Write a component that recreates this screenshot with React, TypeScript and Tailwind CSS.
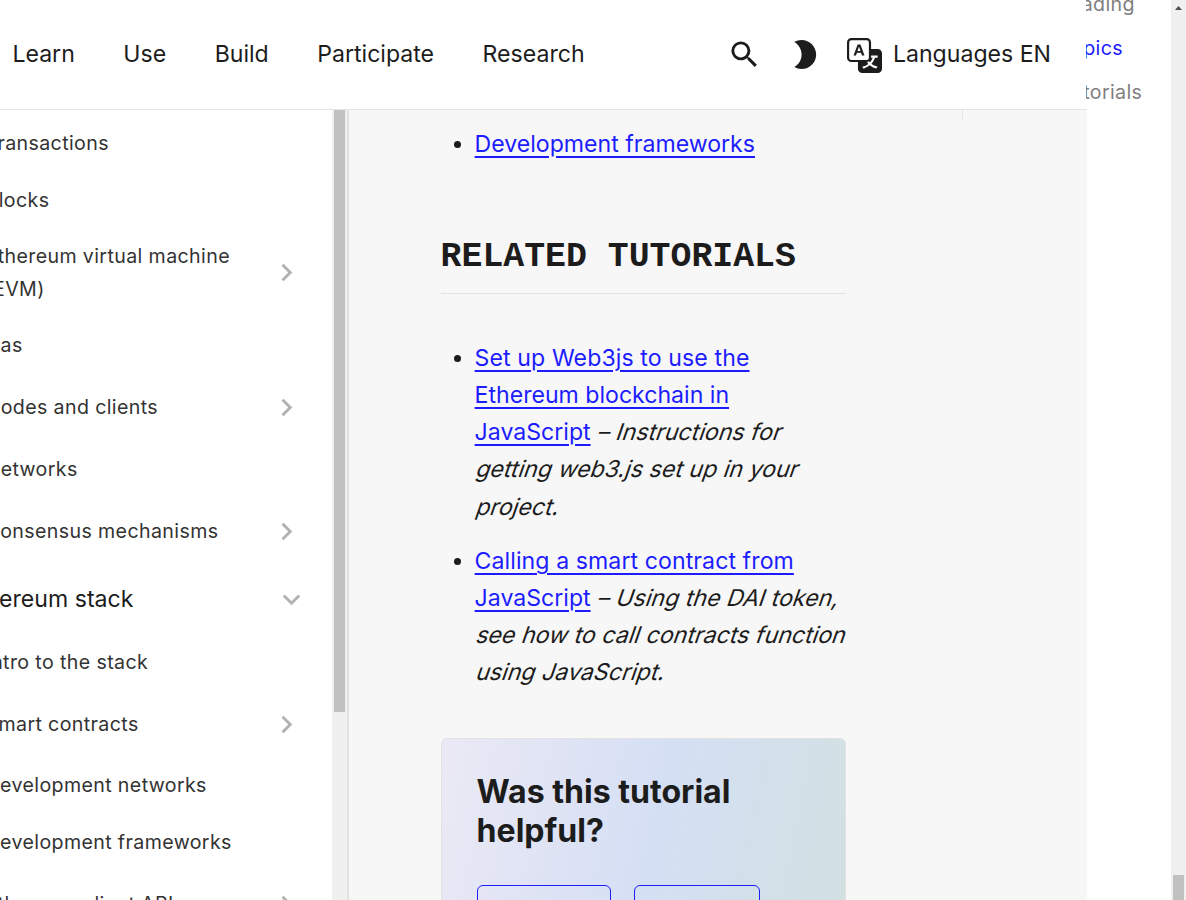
import React from "react";
import { MdSearch, MdBrightness2, MdChevronRight, MdExpandMore } from "react-icons/md";
import { BsTranslate } from "react-icons/bs";

type Item = { label: React.ReactNode; kind: "plain" | "nested" | "tall" | "section" };

const items: Item[] = [
  { label: "Transactions", kind: "plain" },
  { label: "Blocks", kind: "plain" },
  { label: <>Ethereum virtual machine<br />(EVM)</>, kind: "tall" },
  { label: "Gas", kind: "plain" },
  { label: "Nodes and clients", kind: "nested" },
  { label: "Networks", kind: "plain" },
  { label: "Consensus mechanisms", kind: "nested" },
  { label: "Ethereum stack", kind: "section" },
  { label: "Intro to the stack", kind: "plain" },
  { label: "Smart contracts", kind: "nested" },
  { label: "Development networks", kind: "plain" },
  { label: "Development frameworks", kind: "plain" },
  { label: "Ethereum client APIs", kind: "nested" },
];

const rowClass = {
  plain: "h-[56.8px] -ml-[14.5px] text-[19.6px] tracking-[0.38px] text-[#333333]",
  nested: "h-[67.1px] -ml-[14.5px] pr-[28px] text-[19.6px] tracking-[0.38px] text-[#333333]",
  tall: "h-[88.6px] -ml-[14.5px] pr-[28px] text-[19.6px] tracking-[0.38px] text-[#333333]",
  section: "h-[68.7px] -ml-[36px] pr-[23px] text-[23.1px] text-[#1c1c1c]",
};

function Sidebar() {
  return (
    <aside className="flex w-[349px] shrink-0 overflow-hidden bg-white">
      <nav className="w-[332px] overflow-hidden pt-[5px]">
        {items.map((item, i) => (
          <div key={i} className={`flex items-center justify-between leading-[33px] whitespace-nowrap ${rowClass[item.kind]}`}>
            <span>{item.label}</span>
            {(item.kind === "nested" || item.kind === "tall") && <MdChevronRight size={35} className="shrink-0 text-[#b2b2b2]" />}
            {item.kind === "section" && <MdExpandMore size={35} className="shrink-0 text-[#b2b2b2]" />}
          </div>
        ))}
      </nav>
      <div className="flex w-[15px] justify-center bg-[#f0f0f0]">
        <div className="h-[602px] w-[11px] bg-[#c1c1c1]" />
      </div>
      <div className="w-[2px] bg-[#e2e2e2]" />
    </aside>
  );
}

function Link({ children }: { children: React.ReactNode }) {
  return (
    <a className="text-[#1c1cff] underline decoration-2 underline-offset-[4px]">{children}</a>
  );
}

/* One slanted line of upright letterforms, sheared about its baseline. */
function Slanted({ children }: { children: React.ReactNode }) {
  return (
    <em className="-ml-px inline-block origin-[0_73%] -skew-x-[19deg] tracking-[0.03px] not-italic">{children}</em>
  );
}

function Header() {
  return (
    <header className="flex h-[110px] shrink-0 items-center border-b border-[#e5e5e5] bg-white pr-[36px] pl-[12.4px] text-[23.1px] text-[#1c1c1c]">
      <nav className="flex gap-[48.5px]">
        <a>Learn</a>
        <a>Use</a>
        <a>Build</a>
        <a>Participate</a>
        <a>Research</a>
      </nav>
      <div className="ml-auto flex items-center">
        <MdSearch size={35} className="mr-[25px]" />
        <MdBrightness2 size={35} className="mr-[25px]" />
        <BsTranslate size={35} className="mt-px mr-[11px]" />
        <span>Languages EN</span>
      </div>
    </header>
  );
}

function Article() {
  return (
    <main className="flex flex-1 justify-between overflow-hidden pl-[91.6px] text-[#1c1c1c]">
      <div className="w-[405px] text-[23.1px] leading-[37.2px]">
        <ul className="list-disc pt-[15.8px] pl-[34px] marker:text-[21.5px]">
          <li><Link>Development frameworks</Link></li>
        </ul>
        <h2 className="mt-[71.2px] h-[60px] border-b border-[#e2e2e2] font-['Liberation_Mono',monospace] text-[34.83px] leading-[46px] font-bold whitespace-nowrap">
          RELATED TUTORIALS
        </h2>
        <ul className="list-disc pt-[45.6px] pl-[34px] whitespace-nowrap marker:text-[21.5px]">
          <li className="mb-[17px]">
            <Link><span className="tracking-[0.1px]">Set up Web3js to use the</span><br />Ethereum blockchain in<br />JavaScript</Link>{" "}
            <Slanted>– Instructions for</Slanted><br />
            <Slanted>getting web3.js set up in your</Slanted><br />
            <Slanted>project.</Slanted>
          </li>
          <li>
            <Link><span className="tracking-[0.08px]">Calling a smart contract from</span><br />JavaScript</Link>{" "}
            <Slanted>– Using the DAI token,</Slanted><br />
            <Slanted>see how to call contracts function</Slanted><br />
            <Slanted>using JavaScript.</Slanted>
          </li>
        </ul>
        <section className="mt-[46.1px] h-[260px] rounded-[6px] border border-[#e2e2e2] bg-[linear-gradient(102deg,#ebe9f5_0%,#d5dff4_50%,#d0e1e0_100%)] px-[35px] pt-[33px]">
          <h3 className="text-[32.1px] leading-[39px] font-bold">Was this tutorial<br />helpful?</h3>
          <div className="mt-[35px] flex gap-[23px]">
            <button className="h-[60px] w-[134px] rounded-[6px] border border-[#1c1cff]" />
            <button className="h-[60px] w-[126px] rounded-[6px] border border-[#1c1cff]" />
          </div>
        </section>
      </div>
      <div className="h-[10px] w-[125px] border-l border-[#e5e5e5]" />
    </main>
  );
}

export default function App() {
  return (
    <div className="flex h-[900px] w-[1186px] overflow-hidden bg-white font-['Inter',sans-serif]">
      <div className="flex w-[1087px] shrink-0 flex-col bg-[#f7f7f7]">
        <Header />
        <div className="flex min-h-0 flex-1">
          <Sidebar />
          <Article />
        </div>
      </div>
      <aside className="-ml-[1px] w-[85px] overflow-hidden text-[19.6px] leading-[32px] tracking-[0.36px] whitespace-nowrap text-[#7f7f7f]">
        <div className="-mt-[11.6px] -ml-[99px] flex flex-col gap-[12px]">
          <a>Further reading</a>
          <a className="text-[#1c1cff]">Related topics</a>
          <a>Related tutorials</a>
        </div>
      </aside>
      <div className="flex w-[15px] flex-col items-center justify-between bg-[#f0f0f0]">
        <svg width="15" height="15" viewBox="0 0 15 15"><path d="M4 10h7L7.5 6z" fill="#505050" /></svg>
        <div className="h-[25px] w-[11px] bg-[#c1c1c1]" />
      </div>
    </div>
  );
}
